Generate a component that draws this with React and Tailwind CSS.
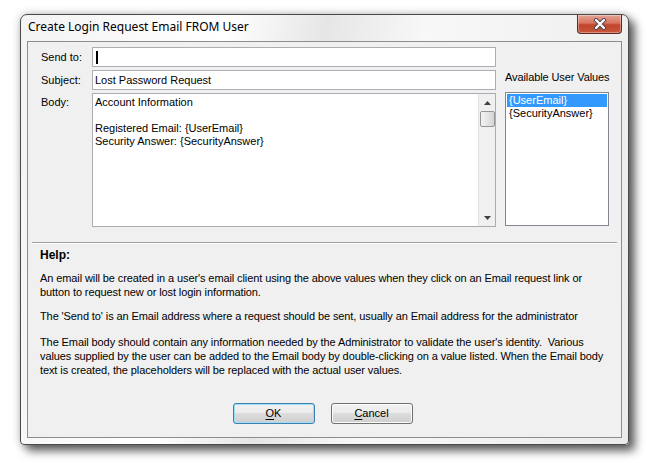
import React from "react";

const ui = { fontFamily: '"Liberation Sans", Arial, sans-serif' };
const title = { fontFamily: '"Noto Sans", "Open Sans", sans-serif' };

function CloseButton() {
  return (
    <div className="flex h-[19px] w-[45px] items-center justify-center rounded-b-[4px] border border-t-0 border-[#5a2a22] bg-[linear-gradient(#e8a596_0%,#d7735f_45%,#c2432b_55%,#c8583f_100%)] shadow-[inset_0_0_0_1px_rgba(255,255,255,0.35)]">
      <svg width="14" height="12" viewBox="0 0 14 12">
        <path d="M3 2 L11 10 M11 2 L3 10" stroke="#4b4b52" strokeWidth="4.2" strokeLinecap="round" />
        <path d="M3 2 L11 10 M11 2 L3 10" stroke="#ffffff" strokeWidth="2.2" strokeLinecap="round" />
      </svg>
    </div>
  );
}

function Button({ children, focused }) {
  return (
    <div
      className={`flex h-[21px] w-[82px] items-center justify-center rounded-[3px] border text-[11px] text-black ${
        focused
          ? "border-[#3c7fb1] shadow-[inset_0_0_0_1px_#9fdcf6]"
          : "border-[#707070] shadow-[inset_0_0_0_1px_#fbfbfb]"
      } bg-[linear-gradient(#f2f2f2_0%,#ebebeb_50%,#dddddd_50%,#cfcfcf_100%)]`}
    >
      {children}
    </div>
  );
}

function Scrollbar() {
  return (
    <div className="flex w-[17px] shrink-0 flex-col items-center border-l border-[#e3e3e3] bg-[#f0f0f0]">
      <div className="flex h-[17px] w-full items-center justify-center">
        <svg width="7" height="4" viewBox="0 0 7 4">
          <path d="M0 4 L3.5 0 L7 4 Z" fill="#404040" />
        </svg>
      </div>
      <div className="h-[16px] w-[15px] rounded-[2px] border border-[#959595] bg-[linear-gradient(90deg,#f3f3f3,#e2e2e2_60%,#d4d4d4)]" />
      <div className="flex-1" />
      <div className="flex h-[17px] w-full items-center justify-center">
        <svg width="7" height="4" viewBox="0 0 7 4">
          <path d="M0 0 L7 0 L3.5 4 Z" fill="#404040" />
        </svg>
      </div>
    </div>
  );
}

export default function App() {
  return (
    <div className="h-[463px] w-[654px] overflow-hidden bg-white pl-[20px] pt-[14px]" style={ui}>
      <div className="flex h-[431px] w-[609px] flex-col rounded-t-[7px] rounded-b-[4px] border border-[#4a4a4a] bg-[linear-gradient(100deg,#f3f3f3_0%,#ffffff_30%,#e6e6e6_45%,#f8f8f8_60%,#ebebeb_100%)] shadow-[6px_6px_10px_rgba(0,0,0,0.6),0_0_8px_rgba(0,0,0,0.25)]">
        <div className="flex h-[26px] shrink-0 items-start justify-between pl-[7px] pr-[6px]">
          <div className="pt-[4px] text-[12px] leading-[16px] text-black" style={title}>
            Create Login Request Email FROM User
          </div>
          <CloseButton />
        </div>

        <div className="mx-[6px] mb-[6px] flex flex-1 flex-col border border-[#8d8d8d] bg-[#f0f0f0] text-[11px] text-black">
          <div className="flex pt-[5px]">
            <div className="flex flex-col">
              <div className="flex h-[20px] items-center">
                <span className="w-[64px] pl-[13px]">Send to:</span>
                <div className="flex h-[20px] w-[404px] items-center border border-[#abadb3] bg-white pl-[3px]">
                  <div className="h-[13px] w-[2px] bg-black" />
                </div>
              </div>
              <div className="mt-[3px] flex h-[20px] items-center">
                <span className="w-[64px] pl-[13px]">Subject:</span>
                <div className="flex h-[20px] w-[404px] items-center border border-[#abadb3] bg-white pl-[2px]">
                  Lost Password Request
                </div>
              </div>
              <div className="mt-[3px] flex">
                <span className="w-[64px] pl-[13px] pt-[3px] leading-[13px]">Body:</span>
                <div className="flex h-[134px] w-[404px] border border-[#abadb3] bg-white">
                  <div className="flex-1 pl-[2px] pt-[2px] leading-[13px]">
                    <div>Account Information</div>
                    <div>&nbsp;</div>
                    <div>Registered Email: {"{UserEmail}"}</div>
                    <div>Security Answer: {"{SecurityAnswer}"}</div>
                  </div>
                  <Scrollbar />
                </div>
              </div>
            </div>

            <div className="ml-[9px] flex w-[104px] flex-col pt-[23px]">
              <div className="h-[14px] whitespace-nowrap leading-[14px] tracking-[-0.1px]">Available User Values</div>
              <div className="mt-[8px] h-[134px] border border-[#828790] bg-white p-px leading-[13px]">
                <div className="bg-[#3399ff] pl-[2px] text-white">{"{UserEmail}"}</div>
                <div className="pl-[2px]">{"{SecurityAnswer}"}</div>
              </div>
            </div>
          </div>

          <div className="mx-[4px] mt-[15px] border-t border-b border-t-[#a0a0a0] border-b-white" />

          <div className="pl-[12px] pt-[4px] leading-[14px] tracking-[-0.1px]">
            <div className="font-bold text-[12px] tracking-normal">Help:</div>
            <div className="mt-[9px] whitespace-nowrap">
              <div>An email will be created in a user's email client using the above values when they click on an Email request link or</div>
              <div>button to request new or lost login information.</div>
            </div>
            <div className="mt-[10px] whitespace-nowrap">
              The 'Send to' is an Email address where a request should be sent, usually an Email address for the administrator
            </div>
            <div className="mt-[12px] whitespace-nowrap">
              <div>The Email body should contain any information needed by the Administrator to validate the user's identity.&nbsp; Various</div>
              <div>values supplied by the user can be added to the Email body by double-clicking on a value listed. When the Email body</div>
              <div>text is created, the placeholders will be replaced with the actual user values.</div>
            </div>
          </div>

          <div className="flex-1" />
          <div className="flex justify-center gap-[16px] pb-[13px] pr-[4px]">
            <Button focused>
              <span className="underline underline-offset-2">O</span>K
            </Button>
            <Button>
              <span className="underline underline-offset-2">C</span>ancel
            </Button>
          </div>
        </div>
      </div>
    </div>
  );
}
